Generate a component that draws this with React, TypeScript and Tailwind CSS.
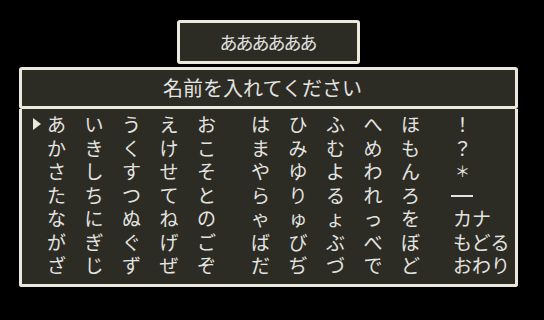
import React from 'react';

const FONT = { fontFamily: '"Noto Sans CJK JP", "Noto Sans", sans-serif' };

const ROWS: string[][] = [
    ['あ', 'い', 'う', 'え', 'お', 'は', 'ひ', 'ふ', 'へ', 'ほ', '！'],
    ['か', 'き', 'く', 'け', 'こ', 'ま', 'み', 'む', 'め', 'も', '？'],
    ['さ', 'し', 'す', 'せ', 'そ', 'や', 'ゆ', 'よ', 'わ', 'ん', '＊'],
    ['た', 'ち', 'つ', 'て', 'と', 'ら', 'り', 'る', 'れ', 'ろ', 'ー'],
    ['な', 'に', 'ぬ', 'ね', 'の', 'ゃ', 'ゅ', 'ょ', 'っ', 'を', 'カナ'],
    ['が', 'ぎ', 'ぐ', 'げ', 'ご', 'ば', 'び', 'ぶ', 'べ', 'ぼ', 'もどる'],
    ['ざ', 'じ', 'ず', 'ぜ', 'ぞ', 'だ', 'ぢ', 'づ', 'で', 'ど', 'おわり'],
];

const Extra: React.FC<{ label: string }> = ({ label }) => {
    if (label === '＊') return <span className="inline-block w-[19px] text-center text-[15px]">＊</span>;
    if (label === 'ー') return <span className="inline-block w-[22px] h-[2px] bg-[#e3e3e0] -ml-[2px] mt-[3px]" />;
    return <span>{label}</span>;
};

const CharRow: React.FC<{ chars: string[]; selected?: boolean }> = ({ chars, selected }) => (
    <div className="flex items-center h-[23.5px]">
        <div className="w-[14px] flex items-center">
            {selected && <span className="block w-0 h-0 border-y-[6px] border-y-transparent border-l-[8px] border-l-[#ebeadc]" />}
        </div>
        {chars.slice(0, 5).map((c, i) => (
            <span key={i} className="w-[37.5px]">{c}</span>
        ))}
        <span className="w-[16.5px]" />
        {chars.slice(5, 10).map((c, i) => (
            <span key={i} className="w-[37.5px]">{c}</span>
        ))}
        <span className="w-[14.5px]" />
        <Extra label={chars[10]} />
    </div>
);

export default function App() {
    return (
        <div className="w-[544px] h-[320px] bg-black overflow-hidden text-[#e3e3e0]" style={FONT}>
            <div className="pt-[20px] pl-[177px]">
                <div className="w-[183px] h-[44px] rounded-[3px] border-[3px] border-[#ebeadc] bg-[#2c2b24] flex items-center justify-center pr-[2px] text-[18px] tracking-[-2px] leading-none">
                    {'あ'.repeat(6)}
                </div>
            </div>
            <div className="ml-[19px] mt-[3px] w-[499px]">
                <div className="h-[42px] rounded-[3px] border-[3px] border-[#ebeadc] bg-[#2c2b24] flex items-center justify-center pr-[12px] text-[20px] leading-none">
                    名前を入れてください
                </div>
                <div className="h-[178px] rounded-b-[3px] border-x-[3px] border-b-[3px] border-[#ebeadc] bg-[#2c2b24] pl-[11px] pt-[3px] text-[19px] leading-none">
                    {ROWS.map((r, i) => (
                        <CharRow key={i} chars={r} selected={i === 0} />
                    ))}
                </div>
            </div>
        </div>
    );
}
